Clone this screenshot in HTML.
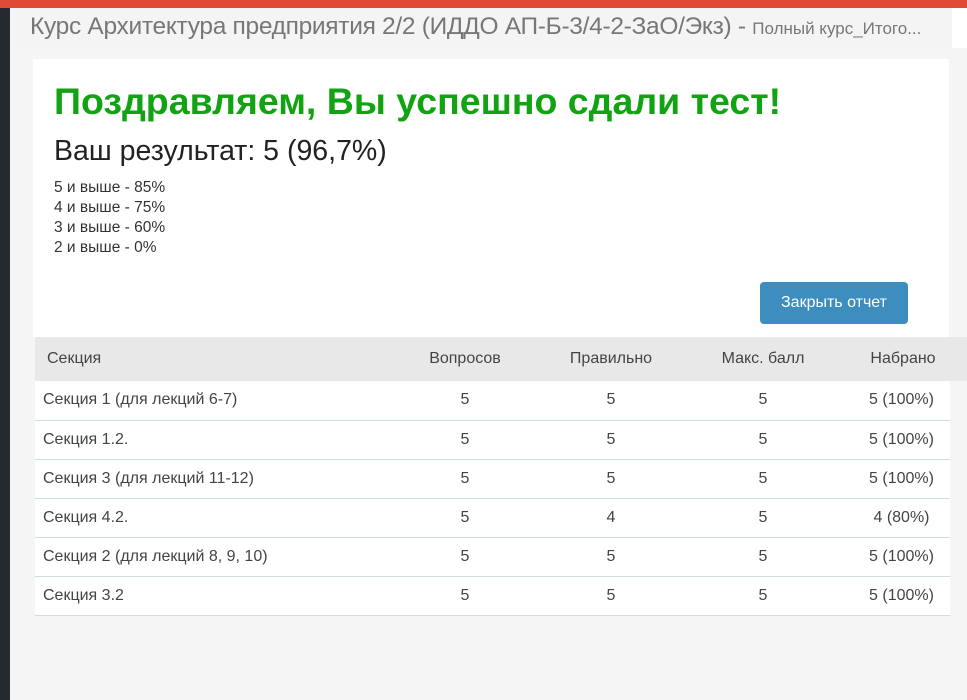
<!DOCTYPE html>
<html><head><meta charset="utf-8"><style>
*{margin:0;padding:0;box-sizing:border-box}
body{width:967px;height:700px;overflow:hidden;background:#f5f5f5;font-family:"Liberation Sans",sans-serif;position:relative;color:#333}
.left{position:absolute;left:0;top:0;width:10px;height:700px;background:#232b2f}
.top{position:absolute;left:0;top:0;width:967px;height:8px;background:#e04b37}
.hdr{position:absolute;left:18px;top:8px;width:934px;height:40px;background:#f4f4f4;font-size:24.5px;color:#777;padding:5px 0 0 12px;white-space:nowrap;letter-spacing:-0.3px}
.hdr small{font-size:17px;letter-spacing:0}
.hw{position:absolute;left:952px;top:8px;width:15px;height:40px;background:#fff}
.box{position:absolute;left:33px;top:59px;width:916px;height:278px;background:#fff}
h1{position:absolute;left:21px;top:21px;font-size:37.5px;color:#12a312;font-weight:bold;white-space:nowrap}
.res{position:absolute;left:21px;top:76px;font-size:28.5px;color:#222;white-space:nowrap}
.sc{position:absolute;left:21px;top:119px;font-size:15.5px;line-height:20px;color:#333}
.btn{position:absolute;left:727px;top:223px;width:148px;height:42px;background:#3d8dbf;border-radius:4px;color:#fff;font-size:16px;text-align:center;line-height:42px}
table{position:absolute;left:35px;top:337px;width:932px;border-collapse:collapse;font-size:16px;color:#444}
th{background:#e8e8e8;height:44px;font-weight:normal;text-align:center}
th:first-child{text-align:left;padding-left:12px}
td{height:39px;text-align:center;border-bottom:1px solid #cfdfdc;background:#fff}
td:first-child{text-align:left;padding-left:8px}
td.e{background:#f5f5f5;border-bottom:none;width:17px}
</style></head><body>
<div class="left"></div><div class="top"></div>
<div class="hdr">Курс Архитектура предприятия 2/2 (ИДДО АП-Б-3/4-2-ЗаО/Экз) - <small>Полный курс_Итого...</small></div>
<div class="hw"></div>
<div class="box">
<h1>Поздравляем, Вы успешно сдали тест!</h1>
<div class="res">Ваш результат: 5 (96,7%)</div>
<div class="sc">5 и выше - 85%<br>4 и выше - 75%<br>3 и выше - 60%<br>2 и выше - 0%</div>
<div class="btn">Закрыть отчет</div>
</div>
<table>
<tr><th style="width:360px">Секция</th><th style="width:140px">Вопросов</th><th style="width:152px">Правильно</th><th style="width:152px">Макс. балл</th><th colspan="2">Набрано</th></tr>
<tr><td>Секция 1 (для лекций 6-7)</td><td>5</td><td>5</td><td>5</td><td style="padding-left:14px">5 (100%)</td><td class="e"></td></tr>
<tr><td>Секция 1.2.</td><td>5</td><td>5</td><td>5</td><td style="padding-left:14px">5 (100%)</td><td class="e"></td></tr>
<tr><td>Секция 3 (для лекций 11-12)</td><td>5</td><td>5</td><td>5</td><td style="padding-left:14px">5 (100%)</td><td class="e"></td></tr>
<tr><td>Секция 4.2.</td><td>5</td><td>4</td><td>5</td><td style="padding-left:14px">4 (80%)</td><td class="e"></td></tr>
<tr><td>Секция 2 (для лекций 8, 9, 10)</td><td>5</td><td>5</td><td>5</td><td style="padding-left:14px">5 (100%)</td><td class="e"></td></tr>
<tr><td>Секция 3.2</td><td>5</td><td>5</td><td>5</td><td style="padding-left:14px">5 (100%)</td><td class="e"></td></tr>
</table>
</body></html>
